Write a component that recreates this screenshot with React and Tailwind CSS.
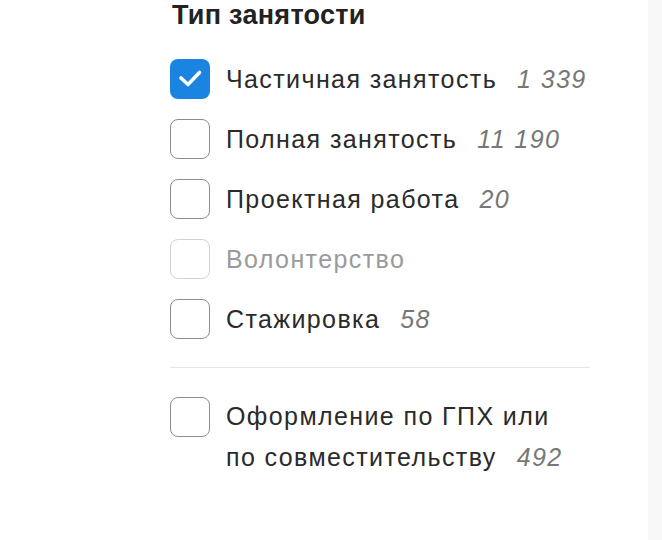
import React from "react";

const items = [
  { label: "Частичная занятость", count: "1 339", checked: true },
  { label: "Полная занятость", count: "11 190" },
  { label: "Проектная работа", count: "20" },
  { label: "Волонтерство", disabled: true },
  { label: "Стажировка", count: "58" },
];

function Box({ checked, disabled }) {
  if (checked)
    return (
      <div className="w-10 h-10 shrink-0 rounded-[8px] bg-[#1b83e0]">
        <svg width="40" height="40" viewBox="0 0 40 40" fill="none" stroke="white" strokeWidth="3.6" strokeLinecap="round" strokeLinejoin="round">
          <path d="M11 19l7 6.5L29.5 13.5" />
        </svg>
      </div>
    );
  return (
    <div
      className={
        "w-10 h-10 shrink-0 rounded-[8px] border-[1.5px] bg-white " +
        (disabled ? "border-[#d2d2d2]" : "border-[#8c8c8c]")
      }
    />
  );
}

export default function App() {
  return (
    <div className="w-[662px] h-[540px] bg-white flex" style={{ fontFamily: '"Liberation Sans", Arial, sans-serif' }}>
      <div className="w-[648px] pl-[170px] pt-0">
        <div className="text-[27px] font-bold text-[#222] leading-[30px] pl-[2px] tracking-[0.3px]">Тип занятости</div>
        <div className="mt-[29px] flex flex-col gap-5 w-[420px]">
          {items.map((it) => (
            <div key={it.label} className="flex items-center gap-4 h-10">
              <Box checked={it.checked} disabled={it.disabled} />
              <div className="text-[25px] leading-[40px] whitespace-nowrap tracking-[1.4px]">
                <span className={it.disabled ? "text-[#9a9a9a]" : "text-[#2a2a2a]"}>{it.label}</span>
                {it.count && <span className="italic text-[#777] ml-5">{it.count}</span>}
              </div>
            </div>
          ))}
        </div>
        <div className="w-[420px] h-px bg-[#e6e6e6] mt-[28px]" />
        <div className="mt-[29px] flex gap-4 items-start">
          <Box />
          <div className="text-[25px] leading-[41px] text-[#2a2a2a] tracking-[1.4px] -mt-[1px]">
            Оформление по ГПХ или
            <br />
            по совместительству<span className="italic text-[#777] ml-5">492</span>
          </div>
        </div>
      </div>
      <div className="flex-1 bg-[#f8f8f8]" />
    </div>
  );
}
